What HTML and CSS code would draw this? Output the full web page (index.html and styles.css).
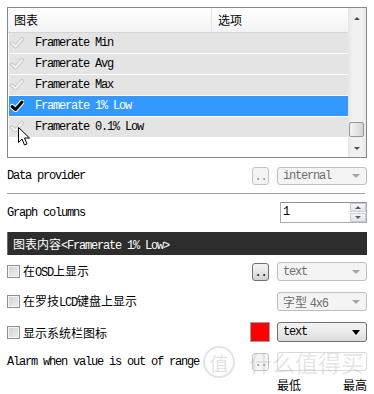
FILE: index.html
```html
<!DOCTYPE html>
<html lang="zh">
<head>
<meta charset="utf-8">
<title>图表</title>
<link rel="stylesheet" href="styles.css">
</head>
<body>
<div class="page">
  <div class="list">
    <div class="table">
      <div class="thead">
        <div class="th c1">图表</div>
        <div class="th c2">选项</div>
      </div>
      <div class="row">
        <svg class="chk" viewBox="0 0 14 12"><path class="g1" d="M2 6.5 L5.5 9.5 L12 2"/><path class="g2" d="M2 6.5 L5.5 9.5 L12 2"/></svg>
        <span class="name a">Framerate Min</span>
      </div>
      <div class="row">
        <svg class="chk" viewBox="0 0 14 12"><path class="g1" d="M2 6.5 L5.5 9.5 L12 2"/><path class="g2" d="M2 6.5 L5.5 9.5 L12 2"/></svg>
        <span class="name a">Framerate Avg</span>
      </div>
      <div class="row">
        <svg class="chk" viewBox="0 0 14 12"><path class="g1" d="M2 6.5 L5.5 9.5 L12 2"/><path class="g2" d="M2 6.5 L5.5 9.5 L12 2"/></svg>
        <span class="name a">Framerate Max</span>
      </div>
      <div class="row active">
        <svg class="chk" viewBox="0 0 14 12"><path class="k1" d="M2 6.5 L5.5 9.5 L12 2"/><path class="k2" d="M2 6.5 L5.5 9.5 L12 2"/></svg>
        <span class="name a">Framerate 1% Low</span>
      </div>
      <div class="row">
        <svg class="chk" viewBox="0 0 14 12"><path class="g1" d="M2 6.5 L5.5 9.5 L12 2"/><path class="g2" d="M2 6.5 L5.5 9.5 L12 2"/></svg>
        <span class="name a">Framerate 0.1% Low</span>
      </div>
    </div>
    <div class="scroll">
      <div class="sbtn up"><i class="stri up"></i></div>
      <div class="track"><div class="thumb"></div></div>
      <div class="sbtn down"><i class="stri down"></i></div>
    </div>
    <svg class="cursor" viewBox="0 0 13 20"><path d="M0.5 0.5 L0.5 15.5 L4 12 L6.5 18 L9 17 L6.5 11 L11.5 11 Z"/></svg>
  </div>

  <div class="field r-provider">
    <span class="a">Data provider</span>
    <div class="ctrls">
      <div class="dots off"><span class="a">..</span></div>
      <div class="dd off"><span class="a">internal</span><i class="tri off"></i></div>
    </div>
  </div>

  <div class="sep"></div>

  <div class="field r-columns">
    <span class="a">Graph columns</span>
    <div class="spin">
      <span class="spin-val a">1</span>
      <div class="spin-btns">
        <div class="spb"><i class="sptri up"></i></div>
        <div class="spb"><i class="sptri down"></i></div>
      </div>
    </div>
  </div>

  <div class="bar">图表内容<span class="a">&lt;Framerate 1% Low&gt;</span></div>

  <div class="field r-osd">
    <label class="cb"><span class="box"></span><span>在<span class="a">OSD</span>上显示</span></label>
    <div class="ctrls">
      <div class="dots on"><span class="a">..</span></div>
      <div class="dd off"><span class="a">text</span><i class="tri off"></i></div>
    </div>
  </div>

  <div class="field r-lcd">
    <label class="cb"><span class="box"></span><span>在罗技<span class="a">LCD</span>键盘上显示</span></label>
    <div class="ctrls">
      <div class="dd off"><span>字型 <span class="a">4x6</span></span><i class="tri off"></i></div>
    </div>
  </div>

  <div class="field r-tray">
    <label class="cb"><span class="box"></span><span>显示系统栏图标</span></label>
    <div class="ctrls tight">
      <div class="swatch"></div>
      <div class="dd on"><span class="a">text</span><i class="tri on"></i></div>
    </div>
  </div>

  <div class="field r-alarm">
    <span class="a">Alarm when value is out of range</span>
    <div class="ctrls">
      <div class="dots off"><span class="a">..</span></div>
      <div class="range"></div>
    </div>
  </div>

  <div class="minmax">
    <span>最低</span>
    <span>最高</span>
  </div>

  <div class="watermark">
    <span class="wm-circle">值</span>
    <span class="wm-text">什么值得买</span>
  </div>
</div>
</body>
</html>
```

FILE: styles.css
```css
* { box-sizing: border-box; margin: 0; padding: 0; }
html, body { background: #fff; }
body {
  width: 374px;
  height: 394px;
  overflow: hidden;
  font-family: "Noto Sans CJK SC", sans-serif;
  font-size: 12px;
  color: #000;
  text-autospace: no-autospace;
}
.a {
  font-family: "Liberation Mono", monospace;
  font-size: 12px;
  letter-spacing: -1.2px;
}
.page {
  position: relative;
  height: 394px;
  padding: 7px 7px 0 7px;
}

/* ---------- list view ---------- */
.list {
  position: relative;
  display: flex;
  width: 360px;
  height: 151px;
  border: 1px solid #828790;
}
.table { width: 340px; }
.thead {
  display: flex;
  height: 25px;
  border-bottom: 1px solid #d5d5d5;
  background: linear-gradient(#ffffff, #f2f3f5);
}
.th { line-height: 24px; padding-left: 6px; }
.c1 { width: 204px; border-right: 1px solid #e3e4e6; }
.c2 { flex: 1; }
.row {
  display: flex;
  align-items: center;
  height: 20px;
  margin: 0 0 1px 1px;
  background: #e4e4e4;
}
.row.active { background: #3399ff; color: #fff; }
.chk { width: 14px; height: 12px; margin-left: 1px; flex: none; }
.chk path { fill: none; stroke-linecap: round; stroke-linejoin: round; }
.chk .g1 { stroke: #c8c8c8; stroke-width: 4; }
.chk .g2 { stroke: #f1f1f1; stroke-width: 2; }
.chk .k1 { stroke: #fff; stroke-width: 5; }
.chk .k2 { stroke: #000; stroke-width: 3; }
.name { margin-left: 11px; line-height: 20px; }

.scroll {
  width: 18px;
  display: flex;
  flex-direction: column;
  background: linear-gradient(90deg, #e6e6e6, #f1f1f1 25%, #f1f1f1 75%, #e9e9e9);
}
.sbtn {
  height: 20px;
  display: flex;
  align-items: center;
  justify-content: center;
}
.sbtn.down { height: 17px; }
.stri { width: 0; height: 0; border-left: 3px solid transparent; border-right: 3px solid transparent; }
.stri.up { border-bottom: 3px solid #505050; }
.stri.down { border-top: 3px solid #505050; }
.track {
  flex: 1;
  display: flex;
  flex-direction: column;
  justify-content: flex-end;
  padding-bottom: 3px;
}
.thumb {
  height: 15px;
  margin: 0 2px 0 1px;
  border: 1px solid #989898;
  border-radius: 2px;
  background: linear-gradient(90deg, #f4f4f4, #e2e2e2 60%, #d4d4d4);
}
.cursor {
  position: absolute;
  left: 10px;
  top: 119px;
  width: 13px;
  height: 20px;
}
.cursor path { fill: #fff; stroke: #000; stroke-width: 1; stroke-linejoin: miter; }

/* ---------- form rows ---------- */
.field {
  display: flex;
  align-items: center;
  justify-content: space-between;
  width: 360px;
}
.ctrls { display: flex; align-items: center; gap: 8px; height: 100%; }
.ctrls.tight { gap: 7px; }
.r-provider { margin-top: 9px; height: 18px; }
.r-columns { margin-top: 8px; height: 21px; }
.r-osd { margin-top: 7px; height: 19px; }
.r-lcd { margin-top: 11px; height: 19px; }
.r-tray { margin-top: 11px; height: 20px; }
.r-alarm { margin-top: 10px; height: 19px; }

.sep {
  margin-top: 8px;
  width: 358px;
  height: 1px;
  background: #a0a0a0;
}

.dots {
  width: 17px;
  height: 18px;
  border-radius: 3px;
  display: flex;
  align-items: flex-end;
  justify-content: center;
  line-height: 14px;
}
.dots.off { border: 1px solid #c4c4c4; background: #f4f4f4; color: #8a8a8a; }
.dots.on { border: 1px solid #707070; background: linear-gradient(#f3f3f3, #e6e6e6 50%, #d2d2d2); color: #000; }

.dd {
  width: 90px;
  height: 100%;
  border-radius: 3px;
  display: flex;
  align-items: center;
  justify-content: space-between;
  padding: 0 6px 0 5px;
}
.dd.off { border: 1px solid #bdbdbd; background: #f4f4f4; color: #6d6d6d; }
.dd.on { border: 1px solid #707070; background: linear-gradient(#f2f2f2, #ebebeb 50%, #dcdcdc); color: #000; }
.tri { width: 0; height: 0; }
.tri.off { border-left: 4px solid transparent; border-right: 4px solid transparent; border-top: 4px solid #a4a4a4; }
.tri.on { border-left: 4px solid transparent; border-right: 4px solid transparent; border-top: 5px solid #000; }

.spin {
  width: 87px;
  height: 21px;
  display: flex;
  border: 1px solid #abadb3;
  border-top-color: #8e8f94;
  background: #fff;
}
.spin-val { flex: 1; padding-left: 2px; line-height: 18px; }
.spin-btns { width: 16px; display: flex; flex-direction: column; gap: 1px; }
.spb {
  flex: 1;
  display: flex;
  align-items: center;
  justify-content: center;
  border: 1px solid #c9cdd3;
  background: linear-gradient(#f4f6f9, #dfe4ea);
}
.sptri { width: 0; height: 0; border-left: 3px solid transparent; border-right: 3px solid transparent; }
.sptri.up { border-bottom: 3px solid #4d6185; }
.sptri.down { border-top: 3px solid #4d6185; }

.bar {
  margin-top: 9px;
  width: 360px;
  height: 23px;
  background: #2d2d2d;
  border-left: 1px solid #6b6b6b;
  color: #fff;
  padding-left: 5px;
  line-height: 23px;
}

.cb { display: flex; align-items: center; gap: 3px; line-height: 19px; }
.box {
  width: 13px;
  height: 13px;
  border: 1px solid #8e8f8f;
  background: linear-gradient(135deg, #d2d2d2, #eeeeee);
  box-shadow: inset 0 0 0 1px #f6f6f6;
  flex: none;
}

.swatch {
  width: 20px;
  height: 20px;
  border: 1px solid #a0a0a0;
  background: #ff0000;
}

.range {
  width: 90px;
  height: 19px;
  border: 1px solid #dadada;
  border-radius: 2px;
  background: #fff;
}

.minmax {
  margin-top: 5px;
  margin-left: 270px;
  width: 90px;
  display: flex;
  justify-content: space-between;
  line-height: 17px;
}

.watermark {
  position: absolute;
  left: 203px;
  top: 346px;
  display: flex;
  align-items: center;
  gap: 14px;
  pointer-events: none;
}
.wm-circle {
  width: 32px;
  height: 32px;
  border: 2px solid rgba(185, 185, 185, 0.4);
  border-radius: 50%;
  display: flex;
  align-items: center;
  justify-content: center;
  font-size: 19px;
  color: rgba(175, 175, 175, 0.4);
}
.wm-text {
  font-size: 23px;
  line-height: 30px;
  color: rgba(175, 175, 175, 0.33);
}
```
